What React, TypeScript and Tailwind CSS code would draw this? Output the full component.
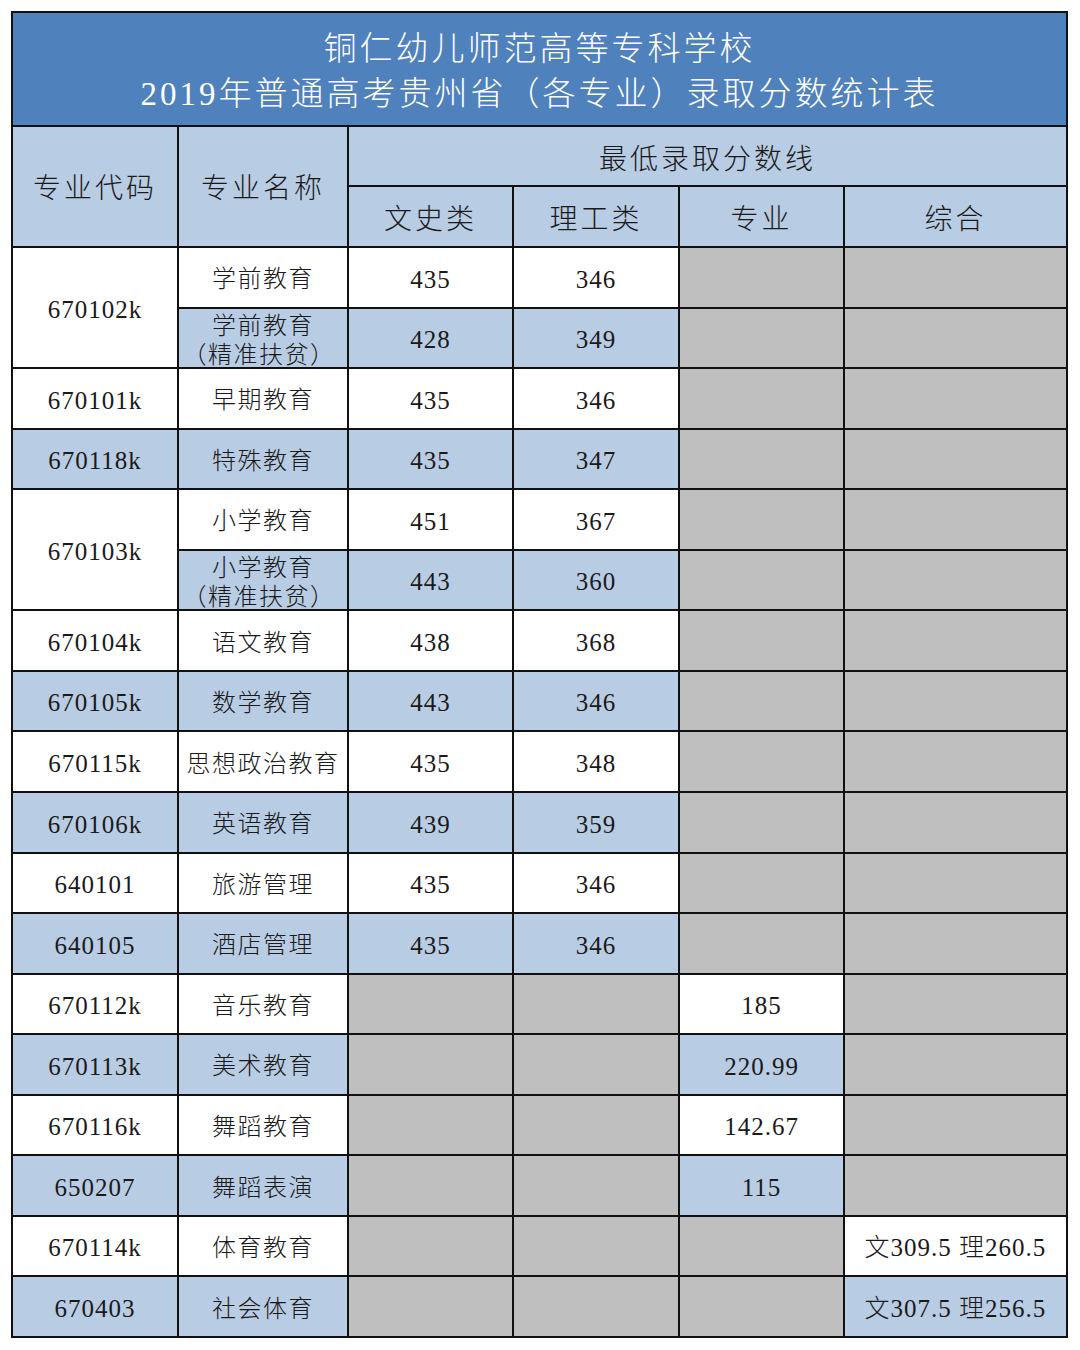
import React from "react";

type Tone = "white" | "blue" | "gray";

interface Row {
  code?: string;
  codeSpan?: boolean;
  name: string;
  sub?: string;
  wen?: string;
  li?: string;
  zy?: string;
  zh?: string;
  tone: "white" | "blue";
}

const rows: Row[] = [
  { code: "670102k", codeSpan: true, name: "学前教育", wen: "435", li: "346", tone: "white" },
  { name: "学前教育", sub: "（精准扶贫）", wen: "428", li: "349", tone: "blue" },
  { code: "670101k", name: "早期教育", wen: "435", li: "346", tone: "white" },
  { code: "670118k", name: "特殊教育", wen: "435", li: "347", tone: "blue" },
  { code: "670103k", codeSpan: true, name: "小学教育", wen: "451", li: "367", tone: "white" },
  { name: "小学教育", sub: "（精准扶贫）", wen: "443", li: "360", tone: "blue" },
  { code: "670104k", name: "语文教育", wen: "438", li: "368", tone: "white" },
  { code: "670105k", name: "数学教育", wen: "443", li: "346", tone: "blue" },
  { code: "670115k", name: "思想政治教育", wen: "435", li: "348", tone: "white" },
  { code: "670106k", name: "英语教育", wen: "439", li: "359", tone: "blue" },
  { code: "640101", name: "旅游管理", wen: "435", li: "346", tone: "white" },
  { code: "640105", name: "酒店管理", wen: "435", li: "346", tone: "blue" },
  { code: "670112k", name: "音乐教育", zy: "185", tone: "white" },
  { code: "670113k", name: "美术教育", zy: "220.99", tone: "blue" },
  { code: "670116k", name: "舞蹈教育", zy: "142.67", tone: "white" },
  { code: "650207", name: "舞蹈表演", zy: "115", tone: "blue" },
  { code: "670114k", name: "体育教育", zh: "文309.5 理260.5", tone: "white" },
  { code: "670403", name: "社会体育", zh: "文307.5 理256.5", tone: "blue" },
];

const toneClass: Record<Tone, string> = {
  white: "bg-white",
  blue: "bg-[#b8cce4]",
  gray: "bg-[#bfbfbf]",
};

const Cell = ({
  tone,
  className = "",
  children,
}: {
  tone: Tone;
  className?: string;
  children?: React.ReactNode;
}) => (
  <div
    className={`${toneClass[tone]} flex items-center justify-center overflow-hidden text-center ${className}`}
  >
    {children}
  </div>
);

export default function App() {
  return (
    <div className="min-h-[1350px] w-[1080px] bg-white pl-[11px] pt-[11px] font-light font-['Liberation_Serif','DejaVu_Serif','Noto_Sans_CJK_SC',serif]">
      <div className="grid h-[1327px] w-[1057px] grid-cols-[164px_168px_163px_164px_163px_221px] grid-rows-[112px_58px_59px_repeat(18,1fr)] gap-[2px] bg-[#111] p-[2px] text-[#1a1a1a]">
        {/* Title */}
        <div className="col-span-6 flex flex-col items-center justify-center bg-[#4f81bd] pt-[6px] text-[33px] leading-[45px] tracking-[3px] text-white">
          <div>铜仁幼儿师范高等专科学校</div>
          <div>2019年普通高考贵州省（各专业）录取分数统计表</div>
        </div>

        {/* Header */}
        <Cell tone="blue" className="row-span-2 pt-[4px] text-[28px] tracking-[3px]">
          专业代码
        </Cell>
        <Cell tone="blue" className="row-span-2 pt-[4px] text-[28px] tracking-[3px]">
          专业名称
        </Cell>
        <Cell tone="blue" className="col-span-4 pt-[8px] text-[28px] tracking-[3px]">
          最低录取分数线
        </Cell>
        <Cell tone="blue" className="pt-[6px] text-[28px] tracking-[3px]">文史类</Cell>
        <Cell tone="blue" className="pt-[6px] text-[28px] tracking-[3px]">理工类</Cell>
        <Cell tone="blue" className="pt-[6px] text-[28px] tracking-[3px]">专业</Cell>
        <Cell tone="blue" className="pt-[6px] text-[28px] tracking-[3px]">综合</Cell>

        {/* Data rows */}
        {rows.map((r, i) => (
          <React.Fragment key={i}>
            {r.code && (
              <Cell
                tone={r.codeSpan ? "white" : r.tone}
                className={`pt-[4px] text-[25px] tracking-[1px] ${r.codeSpan ? "row-span-2" : ""}`}
              >
                {r.code}
              </Cell>
            )}
            {r.sub ? (
              <Cell tone={r.tone} className="items-start text-[24px] leading-[29px] tracking-[1.5px]">
                <div className="pt-[3px]">
                  <div>{r.name}</div>
                  <div className="-ml-[8px]">{r.sub}</div>
                </div>
              </Cell>
            ) : (
              <Cell tone={r.tone} className="pt-[4px] text-[24px] tracking-[1.5px]">
                {r.name}
              </Cell>
            )}
            <Cell tone={r.wen ? r.tone : "gray"} className="pt-[4px] text-[25px] tracking-[1px]">
              {r.wen}
            </Cell>
            <Cell tone={r.li ? r.tone : "gray"} className="pt-[4px] text-[25px] tracking-[1px]">
              {r.li}
            </Cell>
            <Cell tone={r.zy ? r.tone : "gray"} className="pt-[4px] text-[25px] tracking-[1px]">
              {r.zy}
            </Cell>
            <Cell tone={r.zh ? r.tone : "gray"} className="pt-[4px] text-[25px] tracking-[1px] whitespace-pre">
              {r.zh}
            </Cell>
          </React.Fragment>
        ))}
      </div>
    </div>
  );
}
